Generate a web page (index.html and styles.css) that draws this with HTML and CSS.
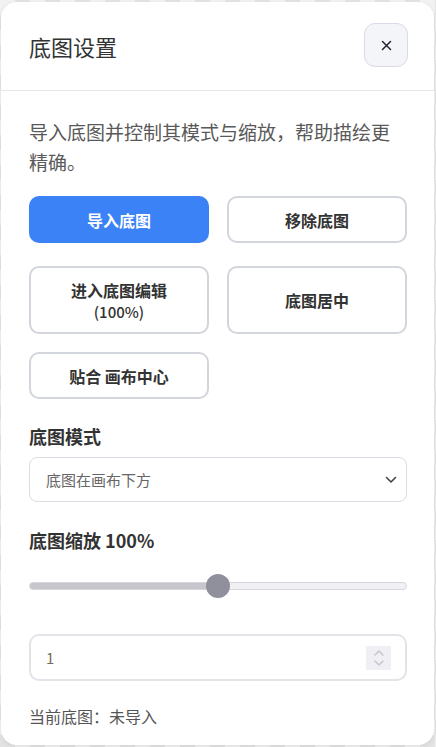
FILE: index.html
```html
<!DOCTYPE html>
<html lang="zh-CN">
<head>
  <meta charset="UTF-8">
  <meta name="viewport" content="width=device-width, initial-scale=1.0">
  <title>底图设置</title>
  <link rel="stylesheet" href="styles.css">
</head>
<body>
  <section class="panel">
    <header class="panel-header">
      <h2>底图设置</h2>
      <button class="close-btn" aria-label="关闭">
        <svg width="11" height="11" viewBox="0 0 11 11"><path d="M1.5 1.5 L9.5 9.5 M9.5 1.5 L1.5 9.5" stroke="#1f2330" stroke-width="1.5" stroke-linecap="round"/></svg>
      </button>
    </header>

    <div class="panel-body">
      <p class="desc">导入底图并控制其模式与缩放，帮助描绘更精确。</p>

      <div class="actions">
        <button class="btn primary">导入底图</button>
        <button class="btn">移除底图</button>
        <button class="btn tall">进入底图编辑<small>(100%)</small></button>
        <button class="btn tall">底图居中</button>
        <button class="btn">贴合 画布中心</button>
      </div>

      <label class="field-label" for="mode">底图模式</label>
      <div class="select-wrap">
        <select id="mode" class="select">
          <option>底图在画布下方</option>
          <option>底图在画布上方</option>
        </select>
        <svg class="chevron" width="12" height="8" viewBox="0 0 12 8"><path d="M1.5 1.5 L6 6 L10.5 1.5" fill="none" stroke="#444" stroke-width="1.6" stroke-linecap="round" stroke-linejoin="round"/></svg>
      </div>

      <label class="field-label scale-label" for="scale">底图缩放 100%</label>
      <input type="range" id="scale" class="range" min="0" max="100" value="50">

      <div class="number-box">
        <input type="text" class="number-input" value="1" aria-label="缩放">
        <span class="spinner">
          <svg width="12" height="20" viewBox="0 0 12 20"><path d="M2 7 L6 3 L10 7 M2 13 L6 17 L10 13" fill="none" stroke="#c4c4cc" stroke-width="1.5" stroke-linecap="round" stroke-linejoin="round"/></svg>
        </span>
      </div>

      <p class="status">当前底图：未导入</p>
    </div>
  </section>
</body>
</html>
```

FILE: styles.css
```css
* {
  box-sizing: border-box;
}

body {
  margin: 0;
  font-family: "Noto Sans CJK SC", "Noto Sans", sans-serif;
  color: #333;
  background-color: #f2f2f2;
  background-image:
    linear-gradient(45deg, #e4e4e4 25%, transparent 25%, transparent 75%, #e4e4e4 75%),
    linear-gradient(45deg, #e4e4e4 25%, transparent 25%, transparent 75%, #e4e4e4 75%);
  background-size: 30px 30px;
  background-position: 0 0, 15px 15px;
  height: 747px;
  overflow: hidden;
}

.panel {
  margin: 2px 2px 0 1px;
  height: 743px;
  background: #fff;
  border-radius: 16px;
  box-shadow: 0 2px 6px rgba(0, 0, 0, 0.08);
  display: flex;
  flex-direction: column;
}

.panel-header {
  height: 89px;
  display: flex;
  align-items: center;
  justify-content: space-between;
  padding: 0 26px 0 28px;
  border-bottom: 1px solid #e6e6ec;
}

.panel-header h2 {
  margin: 0;
  font-size: 22px;
  font-weight: 400;
  color: #333;
}

.close-btn {
  width: 44px;
  height: 44px;
  margin-top: -2px;
  border-radius: 11px;
  border: 1px solid #d9dce8;
  background: #f4f5f9;
  display: flex;
  align-items: center;
  justify-content: center;
  padding: 0;
}

.panel-body {
  padding: 26px 27px 0 28px;
}

.desc {
  margin: 0;
  font-size: 19px;
  line-height: 30px;
  color: #595959;
}

.actions {
  margin-top: 19px;
  display: grid;
  grid-template-columns: 1fr 1fr;
  grid-template-rows: 52px 68px 47px;
  align-items: start;
  gap: 18px;
}

.btn {
  height: 47px;
  border: 2px solid #d3d5dc;
  border-radius: 10px;
  background: #fff;
  font-family: inherit;
  font-size: 16px;
  font-weight: 700;
  color: #333;
  display: flex;
  flex-direction: column;
  align-items: center;
  justify-content: center;
  padding: 0;
}

.btn.primary {
  background: #3b82f6;
  border-color: #3b82f6;
  color: #fff;
}

.btn.tall {
  height: 68px;
}

.btn small {
  font-size: 15px;
  font-weight: 500;
  line-height: 20px;
}

.field-label {
  display: block;
  margin-top: 24px;
  font-size: 18px;
  font-weight: 700;
  color: #333;
  line-height: 26px;
}

.select-wrap {
  position: relative;
  margin-top: 8px;
}

.select {
  width: 100%;
  height: 45px;
  appearance: none;
  border: 1px solid #dcdce4;
  border-radius: 8px;
  background: #fff;
  padding: 0 16px;
  font-family: inherit;
  font-size: 15px;
  color: #666;
}

.chevron {
  position: absolute;
  right: 10px;
  top: 19px;
}

.scale-label {
  margin-top: 25px;
}

.range {
  display: block;
  width: 100%;
  margin: 21px 0 0;
  height: 24px;
  appearance: none;
  background: transparent;
}

.range::-webkit-slider-runnable-track {
  height: 8px;
  border-radius: 4px;
  border: 1px solid #d6d6dd;
  background: linear-gradient(90deg, #c6c6cc 0 50%, #f1f1f5 50% 100%);
}

.range::-webkit-slider-thumb {
  appearance: none;
  width: 24px;
  height: 24px;
  margin-top: -9px;
  border-radius: 50%;
  background: #908f9c;
  border: 0;
}

.number-box {
  margin-top: 36px;
  height: 47px;
  border: 2px solid #e3e3ea;
  border-radius: 10px;
  display: flex;
  align-items: center;
  padding: 0 14px 0 15px;
}

.number-input {
  flex: 1;
  border: 0;
  outline: none;
  font-family: inherit;
  font-size: 15px;
  color: #7a6a5a;
  padding: 0;
  background: transparent;
}

.spinner {
  width: 25px;
  height: 24px;
  background: #f0f0f4;
  display: flex;
  align-items: center;
  justify-content: center;
}

.status {
  margin: 23px 0 0;
  font-size: 16px;
  line-height: 24px;
  color: #555;
}
```
